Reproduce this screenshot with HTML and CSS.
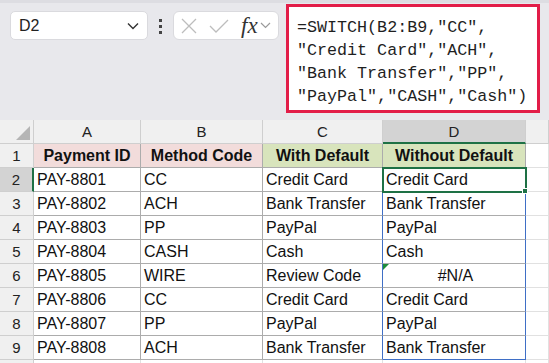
FILE: index.html
```html
<!DOCTYPE html>
<html lang="en">

<head>
    <meta charset="UTF-8">
    <title>SWITCH with and without default</title>
    <link rel="stylesheet" href="styles.css">
</head>

<body>
    <div class="toolbar">
        <div class="namebox">
            <span>D2</span>
            <svg width="12" height="8" viewBox="0 0 12 8"><path d="M1 1.5 L6 6.5 L11 1.5" fill="none" stroke="#333" stroke-width="1.4"/></svg>
        </div>
        <div class="dots"><i></i><i></i><i></i></div>
        <div class="fxbox">
            <svg width="16" height="16" viewBox="0 0 16 16"><path d="M1 1 L15 15 M15 1 L1 15" stroke="#bdbdbd" stroke-width="1.3"/></svg>
            <svg width="20" height="14" viewBox="0 0 20 14"><path d="M1 7 L7 13 L19 1" fill="none" stroke="#bdbdbd" stroke-width="1.3"/></svg>
            <span class="fx">fx</span>
            <svg width="11" height="7" viewBox="0 0 11 7"><path d="M1 1 L5.5 5.5 L10 1" fill="none" stroke="#9a9a9a" stroke-width="1.2"/></svg>
        </div>
        <div class="formula">=SWITCH(B2:B9,"CC",<br>"Credit Card","ACH",<br>"Bank Transfer","PP",<br>"PayPal","CASH","Cash")</div>
    </div>

    <div class="sheet">
        <div class="hd corner"><span class="tri"></span></div>
        <div class="hd col">A</div>
        <div class="hd col">B</div>
        <div class="hd col">C</div>
        <div class="hd col active-col">D</div>
        <div class="hd col"></div>

        <div class="hd rownum">1</div>
        <div class="cell th pink">Payment ID</div>
        <div class="cell th pink">Method Code</div>
        <div class="cell th green">With Default</div>
        <div class="cell th green">Without Default</div>
        <div class="blank"></div>

        <div class="hd rownum active-row">2</div>
        <div class="cell">PAY-8801</div>
        <div class="cell">CC</div>
        <div class="cell rng-left">Credit Card</div>
        <div class="cell rng selected">Credit Card</div>
        <div class="blank"></div>

        <div class="hd rownum">3</div>
        <div class="cell">PAY-8802</div>
        <div class="cell">ACH</div>
        <div class="cell rng-left">Bank Transfer</div>
        <div class="cell rng">Bank Transfer</div>
        <div class="blank"></div>

        <div class="hd rownum">4</div>
        <div class="cell">PAY-8803</div>
        <div class="cell">PP</div>
        <div class="cell rng-left">PayPal</div>
        <div class="cell rng">PayPal</div>
        <div class="blank"></div>

        <div class="hd rownum">5</div>
        <div class="cell">PAY-8804</div>
        <div class="cell">CASH</div>
        <div class="cell rng-left">Cash</div>
        <div class="cell rng">Cash</div>
        <div class="blank"></div>

        <div class="hd rownum">6</div>
        <div class="cell">PAY-8805</div>
        <div class="cell">WIRE</div>
        <div class="cell rng-left">Review Code</div>
        <div class="cell rng error">#N/A</div>
        <div class="blank"></div>

        <div class="hd rownum">7</div>
        <div class="cell">PAY-8806</div>
        <div class="cell">CC</div>
        <div class="cell rng-left">Credit Card</div>
        <div class="cell rng">Credit Card</div>
        <div class="blank"></div>

        <div class="hd rownum">8</div>
        <div class="cell">PAY-8807</div>
        <div class="cell">PP</div>
        <div class="cell rng-left">PayPal</div>
        <div class="cell rng">PayPal</div>
        <div class="blank"></div>

        <div class="hd rownum">9</div>
        <div class="cell">PAY-8808</div>
        <div class="cell">ACH</div>
        <div class="cell rng-left">Bank Transfer</div>
        <div class="cell rng rng-last">Bank Transfer</div>
        <div class="blank"></div>

        <div class="hd rownum"></div>
        <div class="blank"></div>
        <div class="blank"></div>
        <div class="blank"></div>
        <div class="blank"></div>
        <div class="blank"></div>
    </div>
</body>

</html>
```

FILE: styles.css
```css
body {
    margin: 0;
    padding: 0;
    background: #e8e8ec;
    font-family: 'Liberation Sans', Arial, sans-serif;
    overflow: hidden;
}

.toolbar {
    display: flex;
    align-items: flex-start;
    height: 110px;
    border-top: 3px solid #dddde2;
}

.namebox {
    box-sizing: border-box;
    display: flex;
    align-items: center;
    justify-content: space-between;
    width: 138px;
    height: 29px;
    margin: 8px 0 0 10px;
    padding: 0 8px 0 8px;
    background: #fff;
    border: 1px solid #dadade;
    border-radius: 5px;
    font-size: 16px;
    color: #222;
}

.dots {
    display: flex;
    flex-direction: column;
    gap: 3px;
    margin: 16px 11px 0 11px;
}

.dots i {
    display: block;
    width: 3px;
    height: 3px;
    background: #444;
}

.fxbox {
    box-sizing: border-box;
    display: flex;
    align-items: center;
    width: 106px;
    height: 29px;
    margin-top: 8px;
    padding: 0 4px 0 7px;
    background: #fff;
    border: 1px solid #dadade;
    border-radius: 6px;
}

.fxbox svg:nth-child(2) {
    margin-left: 12px;
}

.fx {
    margin-left: 12px;
    font-family: 'Liberation Serif', serif;
    font-style: italic;
    font-size: 23px;
    color: #333;
    line-height: 1;
}

.fxbox svg:last-child {
    margin-left: 2px;
}

.formula {
    box-sizing: border-box;
    width: 254px;
    height: 109px;
    margin: 1px 0 0 7px;
    padding: 9px 0 0 8px;
    background: #fff;
    border: 3px solid #e21d48;
    font-family: 'Liberation Mono', monospace;
    font-size: 16.7px;
    line-height: 23px;
    color: #1f1f1f;
    white-space: nowrap;
}

.sheet {
    display: grid;
    grid-template-columns: 34px 107px 122px 120px 143px 1fr;
    grid-auto-rows: 24px;
    margin-top: 7px;
    background: #fff;
    font-size: 16px;
    color: #111;
}

.sheet > div {
    box-sizing: border-box;
    position: relative;
    line-height: 23px;
    white-space: nowrap;
}

.hd {
    background: #f0f0f0;
    border-right: 1px solid #cfcfcf;
    border-bottom: 1px solid #cfcfcf;
    text-align: center;
    font-size: 15px;
    color: #222;
}

.corner .tri {
    position: absolute;
    right: 3px;
    bottom: 3px;
    width: 0;
    height: 0;
    border-left: 14px solid transparent;
    border-bottom: 14px solid #b5b5b5;
}

.active-col {
    background: #d3d3d3;
    border-bottom: 2px solid #1e7145;
}

.active-row {
    background: #d3d3d3;
    border-right: 2px solid #1e7145;
}

.cell {
    padding-left: 3px;
    border-right: 1px solid #acacac;
    border-bottom: 1px solid #acacac;
}

.th {
    font-weight: bold;
    text-align: center;
    padding-left: 0;
}

.pink {
    background: #f2dcdb;
}

.green {
    background: #d8e4bc;
}

.blank {
    border-right: 1px solid #e1e1e1;
    border-bottom: 1px solid #e1e1e1;
}

.rng-left {
    border-right-color: #3f6fc6;
}

.rng {
    border-right-color: #3f6fc6;
}

.rng-last {
    border-bottom-color: #3f6fc6;
}

.selected {
    outline: 2px solid #1e7145;
    outline-offset: -1px;
    z-index: 2;
}

.selected::after {
    content: '';
    position: absolute;
    right: -3px;
    bottom: -3px;
    width: 4px;
    height: 4px;
    background: #1e7145;
    border: 1px solid #fff;
}

.error {
    text-align: center;
}

.error::before {
    content: '';
    position: absolute;
    left: 0;
    top: 0;
    width: 0;
    height: 0;
    border-top: 6px solid #1e8c3a;
    border-right: 6px solid transparent;
}
```
